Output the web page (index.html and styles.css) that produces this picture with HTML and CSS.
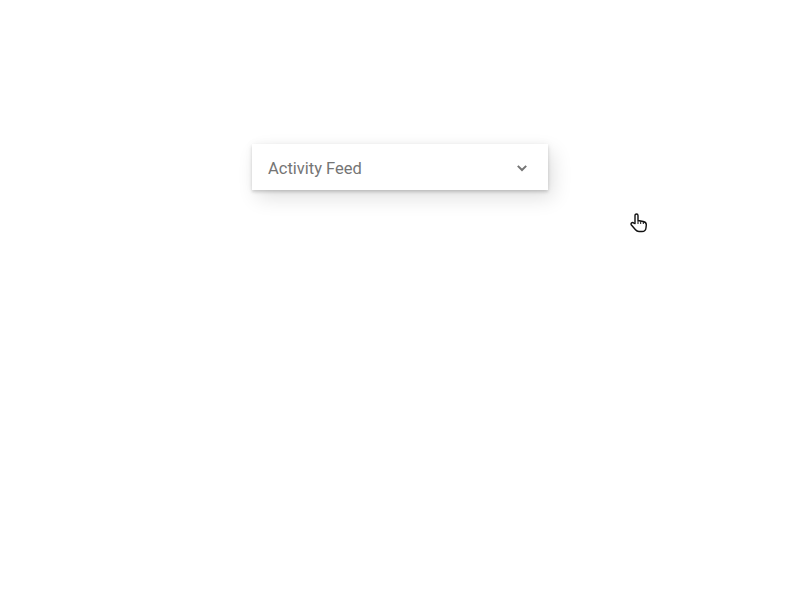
FILE: index.html
```html
<!DOCTYPE html>
<html lang="en">
<head>
  <meta charset="UTF-8" />
  <title>Activity Feed</title>
  <meta name="viewport" content="width=device-width, initial-scale=1.0" />
  <link rel="stylesheet" href="styles.css">
</head>
<body>
  <div class="dropdown">
    <span class="dropdown-label">Activity Feed</span>
    <svg class="chevron" width="24" height="24" viewBox="0 0 24 24">
      <path d="M7.8 9.9 12 14l4.2-4.1" fill="none" stroke="#757575" stroke-width="2"/>
    </svg>
  </div>

  <!-- mouse pointer from the recording -->
  <svg class="cursor" width="18" height="20" viewBox="0 0 18 20">
    <path d="M5 10.500V2.500c0-2 3-2 3 0v5l5.200 1c2 .4 3.200 1.600 3.100 3.500l-.3 2.700c-.2 2.500-1.800 3.800-4 3.800H9c-1.500 0-2.600-.6-3.500-1.700L1.400 12c-1.100-1.700 1-3.200 2.300-1.900z" fill="#fff" stroke="#111" stroke-width="1.400" stroke-linejoin="round"/>
    <path d="M8 8v3M10.700 8.300V11M13.300 8.900V11" fill="none" stroke="#111" stroke-width="1"/>
  </svg>
</body>
</html>
```

FILE: styles.css
```css
body {
  margin: 0;
  height: 600px;
  background: #fff;
  font-family: Roboto, sans-serif;
  overflow: hidden;
}

.dropdown {
  display: flex;
  justify-content: space-between;
  align-items: center;
  box-sizing: border-box;
  width: 296px;
  height: 46px;
  margin: 144px 0 0 252px;
  padding: 2px 14px 0 16px;
  background: #fff;
  box-shadow: 0 2px 3px rgba(0,0,0,0.16), 5px 8px 20px rgba(0,0,0,0.12), 0 0 8px rgba(0,0,0,0.05);
}

.dropdown-label {
  font-size: 16.5px;
  color: #757575;
}

.chevron {
  display: block;
}

.cursor {
  position: absolute;
  left: 630px;
  top: 213px;
}
```
